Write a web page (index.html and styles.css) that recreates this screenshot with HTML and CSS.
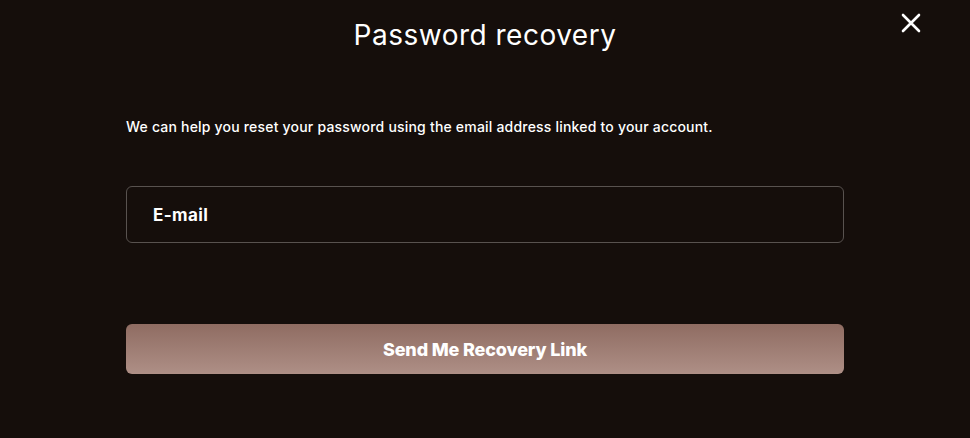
FILE: index.html
```html
<!DOCTYPE html>
<html lang="en">
<head>
<meta charset="utf-8">
<title>Password recovery</title>
<link rel="stylesheet" href="styles.css">
</head>
<body>
<div class="modal">
  <header class="modal-head">
    <h1 class="title">Password recovery</h1>
    <button class="close" aria-label="Close">
      <svg width="20" height="20" viewBox="0 0 20 20"><path d="M2 2L18 18M18 2L2 18" stroke="#fff" stroke-width="2.6" stroke-linecap="round"/></svg>
    </button>
  </header>
  <form class="form">
    <p class="lead">We can help you reset your password using the email address linked to your account.</p>
    <label class="field"><span class="placeholder">E-mail</span></label>
    <button type="button" class="submit">Send Me Recovery Link</button>
  </form>
</div>
</body>
</html>
```
FILE: styles.css
```css
html, body {
  margin: 0;
  padding: 0;
  background: #150e0b;
  height: 100%;
}
body {
  font-family: Inter, Lato, sans-serif;
  color: #fff;
}
.modal {
  width: 970px;
  height: 438px;
  box-sizing: border-box;
}
.modal-head {
  position: relative;
  display: flex;
  justify-content: center;
  padding-top: 16px;
}
.title {
  margin: 0;
  font-size: 28px;
  font-weight: 400;
  line-height: 38px;
  letter-spacing: 0.5px;
}
.close {
  position: absolute;
  top: 12px;
  right: 48px;
  background: none;
  border: 0;
  padding: 0;
  width: 22px;
  height: 22px;
  display: flex;
  align-items: center;
  justify-content: center;
  cursor: pointer;
}
.form {
  display: flex;
  flex-direction: column;
  padding: 0 126px;
}
.lead {
  margin: 64px 0 0;
  font-size: 14px;
  font-weight: 500;
  line-height: 18px;
  letter-spacing: 0.2px;
}
.field {
  margin-top: 50px;
  height: 57px;
  box-sizing: border-box;
  border: 1px solid #58524f;
  border-radius: 6px;
  display: flex;
  align-items: center;
  padding-left: 26px;
}
.placeholder {
  font-size: 17px;
  font-weight: 700;
  letter-spacing: 0.4px;
}
.submit {
  margin-top: 81px;
  height: 50px;
  border: 0;
  border-radius: 6px;
  background: linear-gradient(180deg, #8f6c62 0%, #ae8f86 100%);
  color: #fff;
  font-family: inherit;
  font-size: 18px;
  font-weight: 800;
  letter-spacing: -0.15px;
}
```
